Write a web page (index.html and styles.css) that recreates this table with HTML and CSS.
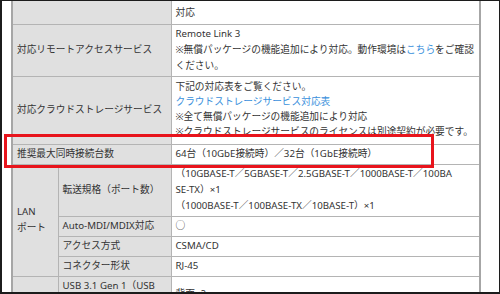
FILE: index.html
```html
<!DOCTYPE html>
<html lang="ja">
<head>
<meta charset="utf-8">
<title>仕様</title>
<link rel="stylesheet" href="styles.css">
</head>
<body>
<div class="frame">
  <table class="spec">
    <colgroup>
      <col class="c-group">
      <col class="c-sub">
      <col class="c-value">
    </colgroup>
    <tr class="first">
      <th colspan="2"></th>
      <td>※ファームウェアのアップデートにより無償パッケージの機能追加に<br>対応</td>
    </tr>
    <tr>
      <th colspan="2">対応リモートアクセスサービス</th>
      <td>Remote Link 3<br>※無償パッケージの機能追加により対応。動作環境は<a href="#">こちら</a>をご確認ください。</td>
    </tr>
    <tr class="dense">
      <th colspan="2">対応クラウドストレージサービス</th>
      <td>下記の対応表をご覧ください。<br><a href="#">クラウドストレージサービス対応表</a><br>※全て無償パッケージの機能追加により対応<br>※クラウドストレージサービスのライセンスは別途契約が必要です。</td>
    </tr>
    <tr>
      <th colspan="2">推奨最大同時接続台数</th>
      <td>64台（10GbE接続時）／32台（1GbE接続時）</td>
    </tr>
    <tr>
      <th rowspan="4" class="group">LAN<br>ポート</th>
      <th class="sub">転送規格（ポート数）</th>
      <td>（10GBASE-T／5GBASE-T／2.5GBASE-T／1000BASE-T／100BA<br>SE-TX）×1<br>（1000BASE-T／100BASE-TX／10BASE-T）×1</td>
    </tr>
    <tr>
      <th class="sub">Auto-MDI/MDIX対応</th>
      <td>○</td>
    </tr>
    <tr>
      <th class="sub">アクセス方式</th>
      <td>CSMA/CD</td>
    </tr>
    <tr>
      <th class="sub">コネクター形状</th>
      <td>RJ-45</td>
    </tr>
    <tr>
      <th rowspan="2" class="group">USB<br>ポート</th>
      <th class="sub">USB 3.1 Gen 1（USB 3.0）</th>
      <td>背面×2</td>
    </tr>
    <tr>
      <th class="sub">USB 2.0</th>
      <td>前面×1</td>
    </tr>
  </table>
  <div class="marker"></div>
</div>
</body>
</html>
```

FILE: styles.css
```css
html, body {
  margin: 0;
  padding: 0;
  background: #ffffff;
}

.frame {
  position: relative;
  box-sizing: border-box;
  width: 500px;
  height: 294px;
  overflow: hidden;
  background: #ffffff;
  border-style: solid;
  border-color: #1c1c1c;
  border-width: 1px 1px 2px 2px;
  font-family: "Noto Sans", "Noto Sans CJK JP", sans-serif;
  font-size: 9.7px;
  line-height: 16px;
  color: #333333;
}

.spec {
  border-collapse: collapse;
  table-layout: fixed;
  width: 468px;
  margin: -14px 0 0 9px;
  border-left: 2px solid #a6a6a6;
  border-right: 2px solid #a6a6a6;
}

.c-group { width: 46px; }
.c-sub { width: 113px; }
.c-value { width: 309px; }

.spec th,
.spec td {
  border: 1px solid #b4b4b4;
  padding: 1px 3px 2px 4px;
  text-align: left;
  vertical-align: middle;
  font-weight: normal;
}

.spec th {
  background: #e0e0e0;
}

.spec td {
  background: #ffffff;
}

.spec .first td {
  padding-bottom: 3px;
}

.spec .dense td {
  line-height: 15px;
  padding-top: 2px;
  padding-bottom: 5px;
}

.spec a {
  color: #3a90dc;
  text-decoration: none;
}

/* red annotation box drawn over the highlighted row */
.marker {
  position: absolute;
  left: 2px;
  top: 133px;
  width: 424px;
  height: 28px;
  border: 3px solid #e8141c;
  pointer-events: none;
}
```
